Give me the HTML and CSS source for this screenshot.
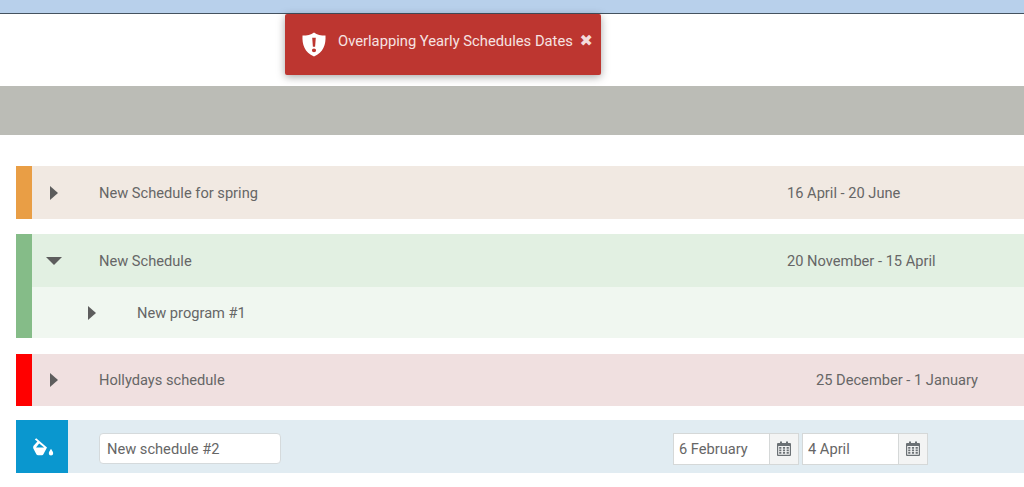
FILE: index.html
```html
<!DOCTYPE html>
<html lang="en">
<head>
  <meta charset="UTF-8">
  <meta name="viewport" content="width=device-width, initial-scale=1.0">
  <title>Yearly Schedules</title>
  <link rel="stylesheet" href="styles.css">
</head>
<body>
  <div class="topbar"></div>

  <div class="toast">
    <svg class="toast-icon" viewBox="0 0 24 28" width="24" height="25" preserveAspectRatio="none">
      <path fill="#fff" fill-rule="evenodd" d="M12 0.5 C15 3 19 4 23.5 4 C24 14 21.5 23 12 27.5 C2.5 23 0 14 0.5 4 C5 4 9 3 12 0.5Z M10.2 6.5 L10.9 16.5 L13.1 16.5 L13.8 6.5Z M12 18.4 A2.1 2.1 0 1 0 12 22.6 A2.1 2.1 0 1 0 12 18.4Z"/>
    </svg>
    <span class="toast-text">Overlapping Yearly Schedules Dates</span>
    <span class="toast-close">&#10006;</span>
  </div>

  <div class="graybar"></div>

  <div class="schedules">
    <div class="schedule schedule-orange">
      <div class="stripe"></div>
      <div class="schedule-body">
        <div class="row">
          <span class="arrow-right"></span>
          <span class="name">New Schedule for spring</span>
          <span class="dates">16 April - 20 June</span>
        </div>
      </div>
    </div>

    <div class="schedule schedule-green">
      <div class="stripe"></div>
      <div class="schedule-body">
        <div class="row">
          <span class="arrow-down"></span>
          <span class="name">New Schedule</span>
          <span class="dates">20 November - 15 April</span>
        </div>
        <div class="row subrow">
          <span class="arrow-right"></span>
          <span class="name">New program #1</span>
        </div>
      </div>
    </div>

    <div class="schedule schedule-red">
      <div class="stripe"></div>
      <div class="schedule-body">
        <div class="row">
          <span class="arrow-right"></span>
          <span class="name">Hollydays schedule</span>
          <span class="dates dates-long">25 December - 1 January</span>
        </div>
      </div>
    </div>

    <div class="schedule schedule-new">
      <div class="paint-btn">
        <svg viewBox="0 0 21 19" width="21" height="19">
          <path fill="#fff" fill-rule="evenodd" d="M3.2 0.2 L14 9.4 L10.4 16.2 C10.1 16.8 9.6 17.2 9 17.2 L5 17.2 C4.4 17.2 3.9 16.9 3.5 16.4 L0.6 11 C0 10 0 8.8 0.6 7.8 L4.4 3.4 L1.8 1.4Z M6.2 5.6 L3 9.4 L11.2 9.4Z"/>
          <path fill="#fff" d="M18 10.8 C18.6 12.2 20.2 13.6 20.2 15.2 A2.2 2.2 0 0 1 15.8 15.2 C15.8 13.6 17.4 12.2 18 10.8Z"/>
        </svg>
      </div>
      <input class="name-input" type="text" value="New schedule #2">
      <div class="date-pickers">
        <div class="date-picker">
          <input type="text" value="6 February">
          <span class="cal-btn">
            <svg viewBox="0 0 14 15" width="14" height="15"><use href="#cal"/></svg>
          </span>
        </div>
        <div class="date-picker">
          <input type="text" value="4 April">
          <span class="cal-btn">
            <svg viewBox="0 0 14 15" width="14" height="15"><use href="#cal"/></svg>
          </span>
        </div>
      </div>
    </div>
  </div>

  <svg class="defs" width="0" height="0">
    <symbol id="cal" viewBox="0 0 14 15">
      <path fill="#6b7175" fill-rule="evenodd" d="M1 2 H3 V0.5 H5 V2 H9 V0.5 H11 V2 H13 A1 1 0 0 1 14 3 V14 A1 1 0 0 1 13 15 H1 A1 1 0 0 1 0 14 V3 A1 1 0 0 1 1 2Z M1.2 5 V13.8 H12.8 V5Z"/>
      <path fill="#6b7175" d="M2.2 6 H4.4 V7.8 H2.2Z M5.9 6 H8.1 V7.8 H5.9Z M9.6 6 H11.8 V7.8 H9.6Z M2.2 8.6 H4.4 V10.2 H2.2Z M5.9 8.6 H8.1 V10.2 H5.9Z M9.6 8.6 H11.8 V10.2 H9.6Z M2.2 11 H4.4 V12.8 H2.2Z M5.9 11 H8.1 V12.8 H5.9Z M9.6 11 H11.8 V12.8 H9.6Z"/>
    </symbol>
  </svg>
</body>
</html>
```

FILE: styles.css
```css
/* Global */
html, body {
  margin: 0;
  padding: 0;
}

body {
  font-family: Roboto, "Liberation Sans", sans-serif;
  font-size: 14.65px;
  color: #666;
  background-color: #fff;
  height: 487px;
  overflow: hidden;
}

.topbar {
  height: 13px;
  background-color: #b8d0eb;
  border-bottom: 1px solid #44525f;
}

.graybar {
  height: 49px;
  margin-top: 72px;
  background-color: #bbbcb6;
}

.defs {
  position: absolute;
}

/* Toast */
.toast {
  position: absolute;
  top: 14px;
  left: 285px;
  width: 316px;
  height: 61px;
  box-sizing: border-box;
  padding: 0 8px 0 17px;
  display: flex;
  align-items: center;
  background-color: #bd3630;
  border-radius: 2px;
  box-shadow: 0 2px 8px rgba(0, 0, 0, 0.35);
  color: #fff;
  font-size: 14.75px;
}

.toast-icon {
  flex: none;
  margin-right: 12px;
}

.toast-text {
  margin-bottom: 8px;
  white-space: nowrap;
  color: #f6e3e2;
}

.toast-close {
  margin-left: auto;
  margin-bottom: 8px;
  font-size: 16px;
  color: #f4dcdb;
  font-family: "DejaVu Sans", sans-serif;
  font-weight: bold;
}

/* Schedule rows */
.schedules {
  margin: 31px 0 0 16px;
}

.schedule {
  display: flex;
  margin-bottom: 15px;
}

.stripe {
  flex: none;
  width: 16px;
}

.schedule-body {
  flex: 1;
}

.row {
  display: flex;
  align-items: center;
  height: 53px;
}

.arrow-right {
  flex: none;
  width: 0;
  height: 0;
  margin-left: 18px;
  border-left: 8px solid #5d5d5d;
  border-top: 7.5px solid transparent;
  border-bottom: 7.5px solid transparent;
}

.arrow-down {
  flex: none;
  width: 0;
  height: 0;
  margin-left: 14px;
  border-top: 8px solid #5d5d5d;
  border-left: 8px solid transparent;
  border-right: 8px solid transparent;
}

.name {
  flex: none;
  width: 688px;
  margin-left: 41px;
  white-space: nowrap;
}

.arrow-down + .name {
  margin-left: 37px;
}

.dates {
  white-space: nowrap;
}

.dates-long {
  margin-left: 29px;
}

.subrow {
  height: 51px;
}

.subrow .arrow-right {
  margin-left: 56px;
}

.subrow .name {
  margin-left: 41px;
}

.schedule-orange .stripe { background-color: #e99e45; }
.schedule-orange .row { background-color: #f1e9e2; }

.schedule-green { margin-bottom: 16px; }
.schedule-green .stripe { background-color: #85bc88; }
.schedule-green .row { background-color: #e2f0e2; }
.schedule-green .subrow { background-color: #f0f7f0; }

.schedule-red { margin-bottom: 14px; }
.schedule-red .stripe { background-color: #ff0000; }
.schedule-red .row { background-color: #f0e0e0; height: 52px; }

/* New schedule form */
.schedule-new {
  height: 53px;
  align-items: center;
  background-color: #e1ecf2;
  margin-bottom: 0;
}

.paint-btn {
  flex: none;
  width: 52px;
  height: 53px;
  padding: 2px 0 0 2px;
  box-sizing: border-box;
  display: flex;
  align-items: center;
  justify-content: center;
  background-color: #0a97cf;
}

.name-input {
  flex: none;
  width: 182px;
  height: 31px;
  box-sizing: border-box;
  margin: 4px 0 0 31px;
  padding: 0 7px;
  border: 1px solid #d5dadc;
  border-radius: 4px;
  background-color: #fff;
  color: #666;
  font: inherit;
}

.date-pickers {
  display: flex;
  gap: 3px;
  margin: 4px 0 0 392px;
}

.date-picker {
  display: flex;
  width: 126px;
  height: 32px;
  box-sizing: border-box;
  border: 1px solid #d5d8d8;
  background-color: #fff;
}

.date-picker input {
  flex: 1;
  min-width: 0;
  box-sizing: border-box;
  padding: 0 5px;
  border: 0;
  color: #666;
  font: inherit;
}

.cal-btn {
  flex: none;
  width: 28px;
  display: flex;
  align-items: center;
  justify-content: center;
  border-left: 1px solid #d5d8d8;
  background-color: #f3f4f4;
}
```
